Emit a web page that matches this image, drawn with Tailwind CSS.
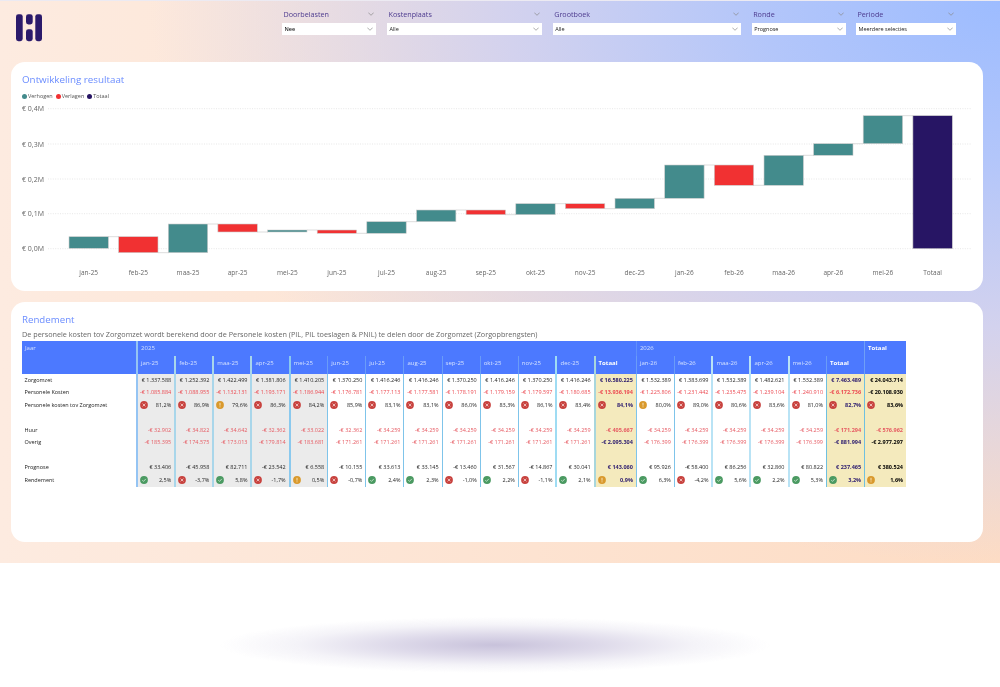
<!DOCTYPE html>
<html lang="nl">
<head>
<meta charset="utf-8">
<title>Rendement</title>
<script src="https://cdn.jsdelivr.net/npm/@tailwindcss/browser@4"></script>
</head>
<body class="bg-white font-['Open_Sans',sans-serif] w-[1000px] h-[687px] overflow-hidden">
<svg class="absolute w-0 h-0">
  <symbol id="x" viewBox="0 0 8 8"><circle cx="4" cy="4" r="3.9" fill="#c8433f"/><path d="M2.6 2.6l2.8 2.8M5.4 2.6L2.6 5.4" stroke="#f6d5d3" stroke-width=".8"/></symbol>
  <symbol id="w" viewBox="0 0 8 8"><circle cx="4" cy="4" r="3.9" fill="#d9992c"/><path d="M4 1.8v2.8M4 5.4v.9" stroke="#fbeccd" stroke-width=".9"/></symbol>
  <symbol id="k" viewBox="0 0 8 8"><circle cx="4" cy="4" r="3.9" fill="#4b9a62"/><path d="M2.3 4.2l1.2 1.2 2.3-2.5" stroke="#d5ecd9" stroke-width=".8" fill="none"/></symbol>
</svg>

<div class="blur-[0.3px]">
<main class="h-[563px] border-t border-[#eceaf2] flex flex-col bg-[radial-gradient(ellipse_85%_100%_at_100%_0%,#9dbcff_0%,#b3c6fa_28%,#d3d2ee_58%,rgba(245,222,225,0)_100%),linear-gradient(to_right,#fdebe0,#fddcc4)]">
  <header class="h-[61px] flex items-start shrink-0">
    <svg class="ml-[16px] mt-[12.5px] w-[26px] h-[28px] text-[#2b1a6b]" viewBox="0 0 26 28" fill="currentColor" aria-label="Logo">
      <rect x="0" y="0.2" width="6.7" height="27" rx="2.4"/>
      <rect x="10" y="0.2" width="6.7" height="10.3" rx="2.4"/>
      <rect x="10" y="15.2" width="6.7" height="12" rx="2.4"/>
      <rect x="19.3" y="0.2" width="6.7" height="27" rx="2.4"/>
    </svg>
    <div class="ml-[240px] flex text-[7.2px] text-[#4c3a8e] leading-[10px]">
      <div class="w-[94px] pt-[7px]">
        <div class="flex items-center justify-between pl-[1.5px] pr-[2px] h-[12px]"><span>Doorbelasten</span><svg class="w-[6px] h-[4px]" viewBox="0 0 6 4" fill="none" stroke="#888" stroke-width=".7"><path d="M.3.6 3 3.3 5.7.6"/></svg></div>
        <div class="mt-[2.5px] h-[12px] bg-white flex items-center justify-between pl-[2.5px] pr-[3px] text-[5.5px] text-[#222] font-semibold"><span>Nee</span><svg class="w-[6px] h-[4px]" viewBox="0 0 6 4" fill="none" stroke="#888" stroke-width=".7"><path d="M.3.6 3 3.3 5.7.6"/></svg></div>
      </div>
      <div class="ml-[11px] w-[155px] pt-[7px]">
        <div class="flex items-center justify-between pl-[1.5px] pr-[2px] h-[12px]"><span>Kostenplaats</span><svg class="w-[6px] h-[4px]" viewBox="0 0 6 4" fill="none" stroke="#888" stroke-width=".7"><path d="M.3.6 3 3.3 5.7.6"/></svg></div>
        <div class="mt-[2.5px] h-[12px] bg-white flex items-center justify-between pl-[2.5px] pr-[3px] text-[5.5px] text-[#222]"><span>Alle</span><svg class="w-[6px] h-[4px]" viewBox="0 0 6 4" fill="none" stroke="#888" stroke-width=".7"><path d="M.3.6 3 3.3 5.7.6"/></svg></div>
      </div>
      <div class="ml-[10.7px] w-[188.6px] pt-[7px]">
        <div class="flex items-center justify-between pl-[1.5px] pr-[2px] h-[12px]"><span>Grootboek</span><svg class="w-[6px] h-[4px]" viewBox="0 0 6 4" fill="none" stroke="#888" stroke-width=".7"><path d="M.3.6 3 3.3 5.7.6"/></svg></div>
        <div class="mt-[2.5px] h-[12px] bg-white flex items-center justify-between pl-[2.5px] pr-[3px] text-[5.5px] text-[#222]"><span>Alle</span><svg class="w-[6px] h-[4px]" viewBox="0 0 6 4" fill="none" stroke="#888" stroke-width=".7"><path d="M.3.6 3 3.3 5.7.6"/></svg></div>
      </div>
      <div class="ml-[10.4px] w-[94.3px] pt-[7px]">
        <div class="flex items-center justify-between pl-[1.5px] pr-[2px] h-[12px]"><span>Ronde</span><svg class="w-[6px] h-[4px]" viewBox="0 0 6 4" fill="none" stroke="#888" stroke-width=".7"><path d="M.3.6 3 3.3 5.7.6"/></svg></div>
        <div class="mt-[2.5px] h-[12px] bg-white flex items-center justify-between pl-[2.5px] pr-[3px] text-[5.5px] text-[#222]"><span>Prognose</span><svg class="w-[6px] h-[4px]" viewBox="0 0 6 4" fill="none" stroke="#888" stroke-width=".7"><path d="M.3.6 3 3.3 5.7.6"/></svg></div>
      </div>
      <div class="ml-[10px] w-[100.5px] pt-[7px]">
        <div class="flex items-center justify-between pl-[1.5px] pr-[2px] h-[12px]"><span>Periode</span><svg class="w-[6px] h-[4px]" viewBox="0 0 6 4" fill="none" stroke="#888" stroke-width=".7"><path d="M.3.6 3 3.3 5.7.6"/></svg></div>
        <div class="mt-[2.5px] h-[12px] bg-white flex items-center justify-between pl-[2.5px] pr-[3px] text-[5.5px] text-[#222]"><span>Meerdere selecties</span><svg class="w-[6px] h-[4px]" viewBox="0 0 6 4" fill="none" stroke="#888" stroke-width=".7"><path d="M.3.6 3 3.3 5.7.6"/></svg></div>
      </div>
    </div>
  </header>

  <section class="mx-[11px] w-[972px] h-[229px] shrink-0 bg-white rounded-[14px] overflow-hidden">
    <h2 class="ml-[11px] mt-[12px] h-[12px] leading-[12px] text-[9.8px] text-[#6b8dff]">Ontwikkeling resultaat</h2>
    <div class="ml-[11px] mt-[7px] h-[7px] flex items-center text-[5.5px] leading-[7px] text-[#555]">
      <span class="size-[5px] rounded-full bg-[#438b8c]"></span><span class="ml-[1px]">Verhogen</span>
      <span class="ml-[3px] size-[5px] rounded-full bg-[#f13132]"></span><span class="ml-[1px]">Verlagen</span>
      <span class="ml-[3px] size-[5px] rounded-full bg-[#271564]"></span><span class="ml-[1px]">Totaal</span>
    </div>
    <svg class="block" width="972" height="191" viewBox="11 100 972 191">
      <g stroke="#ddd" stroke-width=".7" stroke-dasharray="1 1.4">
        <path d="M48 108.7H971M48 144H971M48 179H971M48 213.7H971M48 248.7H971"/>
      </g>
      <g font-size="7" fill="#666">
        <text x="22" y="111.2">€ 0,4M</text><text x="22" y="146.5">€ 0,3M</text><text x="22" y="181.5">€ 0,2M</text><text x="22" y="216.2">€ 0,1M</text><text x="22" y="251.2">€ 0,0M</text>
      </g>
      <g stroke="#ddd" stroke-width="1">
        <path d="M108 236.7h11M158 252.7h11M208 224h10M257 232h11M307 230h10M357 233.3h10M406 221.7h11M456 210h10M505 214.7h11M555 203.7h11M605 208.7h10M654 198.3h11M704 165h10M753 185.3h11M803 155.3h11M853 143.7h10M903 115.7h10"/>
      </g>
      <g stroke="#ccc" stroke-width=".6">
        <rect x="69" y="236.7" width="39.4" height="11.6" fill="#438b8c"/>
        <rect x="118.6" y="236.7" width="39.4" height="16" fill="#f13132"/>
        <rect x="168.3" y="224" width="39.4" height="28.7" fill="#438b8c"/>
        <rect x="217.9" y="224" width="39.4" height="8" fill="#f13132"/>
        <rect x="267.6" y="230" width="39.4" height="2" fill="#438b8c"/>
        <rect x="317.2" y="230" width="39.4" height="3.3" fill="#f13132"/>
        <rect x="366.8" y="221.7" width="39.4" height="11.6" fill="#438b8c"/>
        <rect x="416.5" y="210" width="39.4" height="11.7" fill="#438b8c"/>
        <rect x="466.1" y="210" width="39.4" height="4.7" fill="#f13132"/>
        <rect x="515.8" y="203.7" width="39.4" height="11" fill="#438b8c"/>
        <rect x="565.4" y="203.7" width="39.4" height="5" fill="#f13132"/>
        <rect x="615" y="198.3" width="39.4" height="10.4" fill="#438b8c"/>
        <rect x="664.7" y="165" width="39.4" height="33.3" fill="#438b8c"/>
        <rect x="714.3" y="165" width="39.4" height="20.3" fill="#f13132"/>
        <rect x="764" y="155.3" width="39.4" height="30" fill="#438b8c"/>
        <rect x="813.6" y="143.7" width="39.4" height="11.6" fill="#438b8c"/>
        <rect x="863.2" y="115.7" width="39.4" height="28" fill="#438b8c"/>
        <rect x="912.9" y="115.7" width="39.4" height="133" fill="#271564"/>
      </g>
      <g font-size="6.5" fill="#666" text-anchor="middle">
        <text x="88.7" y="275">jan-25</text><text x="138.3" y="275">feb-25</text><text x="188" y="275">maa-25</text><text x="237.6" y="275">apr-25</text><text x="287.3" y="275">mei-25</text><text x="336.9" y="275">jun-25</text><text x="386.5" y="275">jul-25</text><text x="436.2" y="275">aug-25</text><text x="485.8" y="275">sep-25</text><text x="535.5" y="275">okt-25</text><text x="585.1" y="275">nov-25</text><text x="634.7" y="275">dec-25</text><text x="684.4" y="275">jan-26</text><text x="734" y="275">feb-26</text><text x="783.7" y="275">maa-26</text><text x="833.3" y="275">apr-26</text><text x="882.9" y="275">mei-26</text><text x="932.6" y="275">Totaal</text>
      </g>
    </svg>
  </section>

  <section class="mx-[11px] mt-[11px] w-[972px] h-[240px] shrink-0 bg-white rounded-[14px] overflow-hidden">
    <h2 class="ml-[11px] mt-[11.5px] h-[12px] leading-[12px] text-[9.7px] text-[#6b8dff]">Rendement</h2>
    <p class="ml-[11px] mt-[4px] h-[8px] leading-[8px] text-[7.25px] text-[#666] whitespace-nowrap">De personele kosten tov Zorgomzet wordt berekend door de Personele kosten (PIL, PIL toeslagen &amp; PNIL) te delen door de Zorgomzet (Zorgopbrengsten)</p>
    <table class="ml-[11px] mt-[3.5px] w-[884px] table-fixed border-collapse text-[5.5px] font-medium leading-none text-[#262626] [&_td]:p-0 [&_td]:pr-[3px] [&_td]:h-[12.5px] [&_td]:text-right [&_td]:whitespace-nowrap [&_td:first-child]:text-left [&_td:first-child]:pl-[2.5px] [&_td:first-child]:text-[#222] [&_td:nth-child(14)]:font-bold [&_td:nth-child(20)]:font-bold [&_td:nth-child(21)]:font-bold [&_td>div]:flex [&_td>div]:items-center [&_td>div]:justify-between [&_td>div]:pl-[2px] [&_svg]:size-[8px] [&_svg]:shrink-0">
      <colgroup>
        <col class="w-[115px]">
        <col class="w-[38.1px] bg-[#ebebeb] border-l-2 border-[#95c4f3]"><col class="w-[38.1px] bg-[#ebebeb] border-l-2 border-[#a9d6ea]"><col class="w-[38.1px] bg-[#ebebeb] border-l-2 border-[#a9d6ea]"><col class="w-[38.1px] bg-[#ebebeb] border-l-2 border-[#a9d6ea]"><col class="w-[38.1px] bg-[#ebebeb] border-l-2 border-[#8ac9ee]">
        <col class="w-[38.1px] border-l border-[#7fc4ea]"><col class="w-[38.1px] border-l border-[#7fc4ea]"><col class="w-[38.1px] border-l border-[#7fc4ea]"><col class="w-[38.1px] border-l border-[#7fc4ea]"><col class="w-[38.1px] border-l border-[#7fc4ea]"><col class="w-[38.1px] border-l border-[#7fc4ea]"><col class="w-[38.1px] border-l-2 border-[#9fdcf3]">
        <col class="w-[41.6px] bg-[#f4eabd] border-l-2 border-[#a8d6dc]">
        <col class="w-[38px] border-l border-[#7fc4ea]"><col class="w-[38px] border-l border-[#7fc4ea]"><col class="w-[38px] border-l-2 border-[#b9e3f5]"><col class="w-[38px] border-l-2 border-[#b9e3f5]"><col class="w-[38px] border-l-2 border-[#b9e3f5]">
        <col class="w-[38px] bg-[#f4eabd] border-l border-[#6fc0e0]">
        <col class="w-[41.3px] bg-[#f4eabd] border-l border-[#6fc0e0]">
      </colgroup>
      <thead class="text-[6px] leading-[6px] text-[#d4e1ff] [&_th]:bg-[#4c79ff] [&_th]:p-0 [&_th]:pl-[3px] [&_th]:font-normal [&_th]:text-left [&_th]:align-top">
        <tr class="h-[15px] [&_th]:pt-[4px]">
          <th rowspan="2">Jaar</th>
          <th colspan="13" class="border-l border-[#7fb0f5]">2025</th>
          <th colspan="6" class="border-l border-[#5f8ffb]">2026</th>
          <th rowspan="2" class="border-l border-[#6f9ff7] text-white font-bold!">Totaal</th>
        </tr>
        <tr class="h-[18px] [&_th]:pt-[3.5px] [&_th]:border-l [&_th]:border-[#6a9cf8]">
          <th>jan-25</th><th>feb-25</th><th>maa-25</th><th>apr-25</th><th>mei-25</th><th>jun-25</th><th>jul-25</th><th>aug-25</th><th>sep-25</th><th>okt-25</th><th>nov-25</th><th>dec-25</th><th class="text-white font-bold!">Totaal</th>
          <th>jan-26</th><th>feb-26</th><th>maa-26</th><th>apr-26</th><th>mei-26</th><th class="text-white font-bold!">Totaal</th>
        </tr>
      </thead>
      <tbody>
        <tr><td>Zorgomzet</td><td>€ 1.337.588</td><td>€ 1.252.392</td><td>€ 1.422.499</td><td>€ 1.381.806</td><td>€ 1.410.205</td><td>€ 1.370.250</td><td>€ 1.416.246</td><td>€ 1.416.246</td><td>€ 1.370.250</td><td>€ 1.416.246</td><td>€ 1.370.250</td><td>€ 1.416.246</td><td class="text-[#2a1a6e]">€ 16.580.225</td><td>€ 1.532.389</td><td>€ 1.383.699</td><td>€ 1.532.389</td><td>€ 1.482.621</td><td>€ 1.532.389</td><td class="text-[#2a1a6e]">€ 7.463.489</td><td class="text-black">€ 24.043.714</td></tr>
        <tr class="text-[#ec4a52]"><td>Personele Kosten</td><td>-€ 1.085.884</td><td>-€ 1.088.955</td><td>-€ 1.132.131</td><td>-€ 1.193.171</td><td>-€ 1.186.944</td><td>-€ 1.176.781</td><td>-€ 1.177.113</td><td>-€ 1.177.581</td><td>-€ 1.178.191</td><td>-€ 1.179.159</td><td>-€ 1.179.597</td><td>-€ 1.180.685</td><td>-€ 13.936.194</td><td>-€ 1.225.806</td><td>-€ 1.231.442</td><td>-€ 1.235.475</td><td>-€ 1.239.104</td><td>-€ 1.240.910</td><td>-€ 6.172.736</td><td class="text-black">-€ 20.108.930</td></tr>
        <tr><td>Personele kosten tov Zorgomzet</td><td><div><svg><use href="#x"/></svg>81,2%</div></td><td><div><svg><use href="#x"/></svg>86,9%</div></td><td><div><svg><use href="#w"/></svg>79,6%</div></td><td><div><svg><use href="#x"/></svg>86,3%</div></td><td><div><svg><use href="#x"/></svg>84,2%</div></td><td><div><svg><use href="#x"/></svg>85,9%</div></td><td><div><svg><use href="#x"/></svg>83,1%</div></td><td><div><svg><use href="#x"/></svg>83,1%</div></td><td><div><svg><use href="#x"/></svg>86,0%</div></td><td><div><svg><use href="#x"/></svg>83,3%</div></td><td><div><svg><use href="#x"/></svg>86,1%</div></td><td><div><svg><use href="#x"/></svg>83,4%</div></td><td class="text-[#2a1a6e]"><div><svg><use href="#x"/></svg>84,1%</div></td><td><div><svg><use href="#w"/></svg>80,0%</div></td><td><div><svg><use href="#x"/></svg>89,0%</div></td><td><div><svg><use href="#x"/></svg>80,6%</div></td><td><div><svg><use href="#x"/></svg>83,6%</div></td><td><div><svg><use href="#x"/></svg>81,0%</div></td><td class="text-[#2a1a6e]"><div><svg><use href="#x"/></svg>82,7%</div></td><td class="text-black"><div><svg><use href="#x"/></svg>83,6%</div></td></tr>
        <tr><td></td><td></td><td></td><td></td><td></td><td></td><td></td><td></td><td></td><td></td><td></td><td></td><td></td><td></td><td></td><td></td><td></td><td></td><td></td><td></td><td></td></tr>
        <tr class="text-[#e65a62]"><td>Huur</td><td>-€ 32.902</td><td>-€ 34.822</td><td>-€ 34.642</td><td>-€ 32.362</td><td>-€ 33.022</td><td>-€ 32.362</td><td>-€ 34.259</td><td>-€ 34.259</td><td>-€ 34.259</td><td>-€ 34.259</td><td>-€ 34.259</td><td>-€ 34.259</td><td>-€ 405.667</td><td>-€ 34.259</td><td>-€ 34.259</td><td>-€ 34.259</td><td>-€ 34.259</td><td>-€ 34.259</td><td>-€ 171.294</td><td>-€ 576.962</td></tr>
        <tr class="text-[#e65a62]"><td>Overig</td><td>-€ 185.395</td><td>-€ 174.575</td><td>-€ 173.013</td><td>-€ 179.814</td><td>-€ 183.681</td><td>-€ 171.261</td><td>-€ 171.261</td><td>-€ 171.261</td><td>-€ 171.261</td><td>-€ 171.261</td><td>-€ 171.261</td><td>-€ 171.261</td><td class="text-[#2a1a6e]">-€ 2.095.304</td><td>-€ 176.399</td><td>-€ 176.399</td><td>-€ 176.399</td><td>-€ 176.399</td><td>-€ 176.399</td><td class="text-[#2a1a6e]">-€ 881.994</td><td class="text-black">-€ 2.977.297</td></tr>
        <tr><td></td><td></td><td></td><td></td><td></td><td></td><td></td><td></td><td></td><td></td><td></td><td></td><td></td><td></td><td></td><td></td><td></td><td></td><td></td><td></td><td></td></tr>
        <tr><td>Prognose</td><td>€ 33.406</td><td>-€ 45.958</td><td>€ 82.711</td><td>-€ 23.542</td><td>€ 6.558</td><td>-€ 10.155</td><td>€ 33.613</td><td>€ 33.145</td><td>-€ 13.460</td><td>€ 31.567</td><td>-€ 14.867</td><td>€ 30.041</td><td class="text-[#2a1a6e]">€ 143.060</td><td>€ 95.926</td><td>-€ 58.400</td><td>€ 86.256</td><td>€ 32.860</td><td>€ 80.822</td><td class="text-[#2a1a6e]">€ 237.465</td><td class="text-black">€ 380.524</td></tr>
        <tr><td>Rendement</td><td><div><svg><use href="#k"/></svg>2,5%</div></td><td><div><svg><use href="#x"/></svg>-3,7%</div></td><td><div><svg><use href="#k"/></svg>5,8%</div></td><td><div><svg><use href="#x"/></svg>-1,7%</div></td><td><div><svg><use href="#w"/></svg>0,5%</div></td><td><div><svg><use href="#x"/></svg>-0,7%</div></td><td><div><svg><use href="#k"/></svg>2,4%</div></td><td><div><svg><use href="#k"/></svg>2,3%</div></td><td><div><svg><use href="#x"/></svg>-1,0%</div></td><td><div><svg><use href="#k"/></svg>2,2%</div></td><td><div><svg><use href="#x"/></svg>-1,1%</div></td><td><div><svg><use href="#k"/></svg>2,1%</div></td><td class="text-[#2a1a6e]"><div><svg><use href="#w"/></svg>0,9%</div></td><td><div><svg><use href="#k"/></svg>6,3%</div></td><td><div><svg><use href="#x"/></svg>-4,2%</div></td><td><div><svg><use href="#k"/></svg>5,6%</div></td><td><div><svg><use href="#k"/></svg>2,2%</div></td><td><div><svg><use href="#k"/></svg>5,3%</div></td><td class="text-[#2a1a6e]"><div><svg><use href="#k"/></svg>3,2%</div></td><td class="text-black"><div><svg><use href="#w"/></svg>1,6%</div></td></tr>
      </tbody>
    </table>
  </section>
</main>
<div class="mt-[54px] ml-[220px] w-[550px] h-[56px] bg-[radial-gradient(ellipse_closest-side,#c8c2db_0%,#dedaea_38%,#f4f3f8_72%,transparent_100%)]"></div>
</div>
</body>
</html>
